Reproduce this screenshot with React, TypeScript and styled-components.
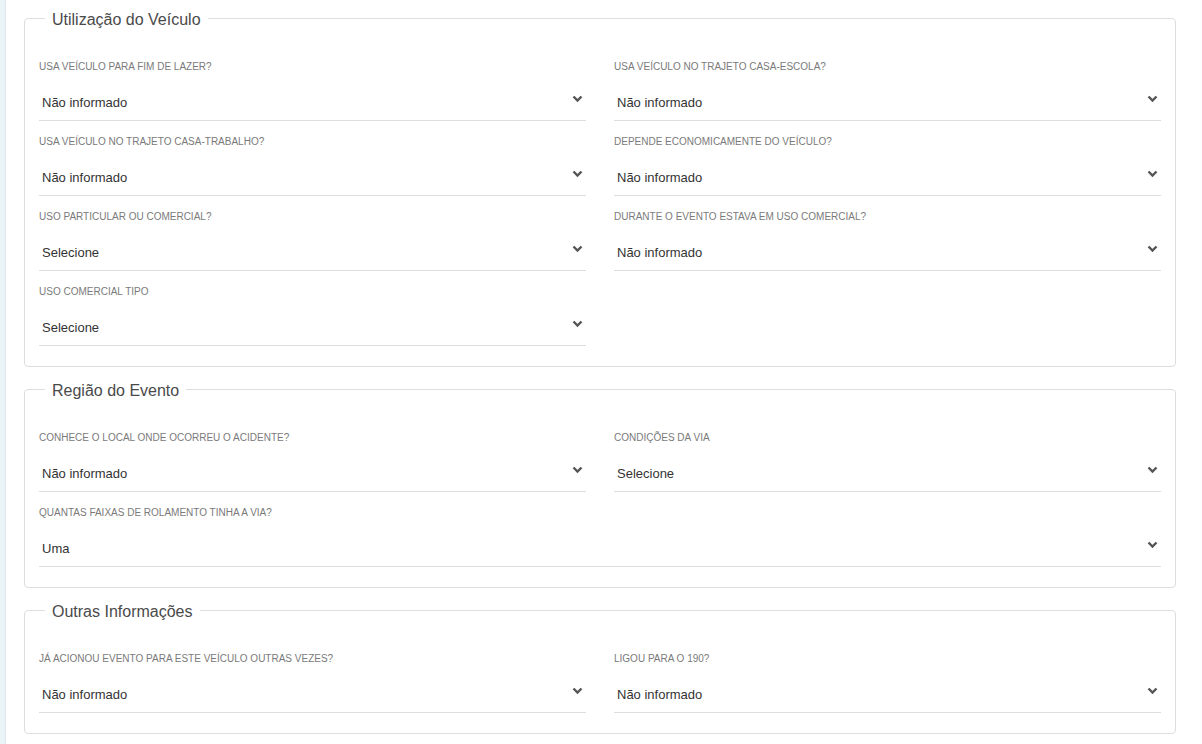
import * as React from 'react';
import styled, { createGlobalStyle } from 'styled-components';

/* ==================== [Style] ==================== */
const GlobalStyle = createGlobalStyle`
    body {
        margin: 0;
        background-color: #ffffff;
        font-family: "Liberation Sans", Arial, sans-serif;
    }
`;

const Page = styled.div`
    display: flex;
    min-height: 100vh;
`;

const SideStrip = styled.div`
    flex: 0 0 5px;
    background-color: #eaf3f8;
    border-right: 1px solid #dbe7ee;
`;

const Main = styled.main`
    flex: 1;
    display: flex;
    flex-direction: column;
    gap: 11px;
    padding: 7px 26px 0 18px;
`;

const Fieldset = styled.fieldset`
    margin: 0;
    min-width: 0;
    padding: 32px 14px 20px;
    border: 1px solid #dddddd;
    border-radius: 4px;
`;

const Legend = styled.legend`
    margin-left: 6px;
    padding: 4px 7px 0;
    font-size: 16px;
    line-height: 18px;
    color: #4a4a4a;
`;

const Grid = styled.div`
    display: grid;
    grid-template-columns: 1fr 1fr;
    column-gap: 28px;
    row-gap: 15px;
`;

const Field = styled.div<{ $wide?: boolean }>`
    display: flex;
    flex-direction: column;
    grid-column: ${(p) => (p.$wide ? '1 / -1' : 'auto')};
`;

const Label = styled.label`
    font-size: 10px;
    line-height: 12px;
    color: #7a7a7a;
    text-transform: uppercase;
`;

const Select = styled.div`
    display: flex;
    align-items: center;
    justify-content: space-between;
    box-sizing: border-box;
    height: 36px;
    margin-top: 12px;
    padding: 0 3px;
    border-bottom: 1px solid #dddddd;
    cursor: pointer;
`;

const Value = styled.span`
    font-size: 13px;
    color: #333333;
`;

const Chevron = styled.svg`
    margin-bottom: 7px;
`;

/* ==================== [Data] ==================== */
interface FieldData {
    label: string;
    value: string;
    wide?: boolean;
}

interface Section {
    title: string;
    fields: FieldData[];
}

const sections: Section[] = [
    {
        title: 'Utilização do Veículo',
        fields: [
            { label: 'Usa veículo para fim de lazer?', value: 'Não informado' },
            { label: 'Usa veículo no trajeto casa-escola?', value: 'Não informado' },
            { label: 'Usa veículo no trajeto casa-trabalho?', value: 'Não informado' },
            { label: 'Depende economicamente do veículo?', value: 'Não informado' },
            { label: 'Uso particular ou comercial?', value: 'Selecione' },
            { label: 'Durante o evento estava em uso comercial?', value: 'Não informado' },
            { label: 'Uso comercial tipo', value: 'Selecione' },
        ],
    },
    {
        title: 'Região do Evento',
        fields: [
            { label: 'Conhece o local onde ocorreu o acidente?', value: 'Não informado' },
            { label: 'Condições da via', value: 'Selecione' },
            { label: 'Quantas faixas de rolamento tinha a via?', value: 'Uma', wide: true },
        ],
    },
    {
        title: 'Outras Informações',
        fields: [
            { label: 'Já acionou evento para este veículo outras vezes?', value: 'Não informado' },
            { label: 'Ligou para o 190?', value: 'Não informado' },
        ],
    },
];

/* ==================== [Components] ==================== */
const ChevronDown = () => (
    <Chevron width="11" height="8" viewBox="0 0 11 8" aria-hidden>
        <path d="M1.5 1.5 L5.5 5.5 L9.5 1.5" fill="none" stroke="#555555" strokeWidth="2.4" />
    </Chevron>
);

const SelectField = ({ label, value, wide }: FieldData) => (
    <Field $wide={wide}>
        <Label>{label}</Label>
        <Select role="combobox">
            <Value>{value}</Value>
            <ChevronDown />
        </Select>
    </Field>
);

const App = () => {
    return (
        <Page>
            <GlobalStyle />
            <SideStrip />
            <Main>
                {sections.map((section) => (
                    <Fieldset key={section.title}>
                        <Legend>{section.title}</Legend>
                        <Grid>
                            {section.fields.map((f) => (
                                <SelectField key={f.label} {...f} />
                            ))}
                        </Grid>
                    </Fieldset>
                ))}
            </Main>
        </Page>
    );
};

export default App;
